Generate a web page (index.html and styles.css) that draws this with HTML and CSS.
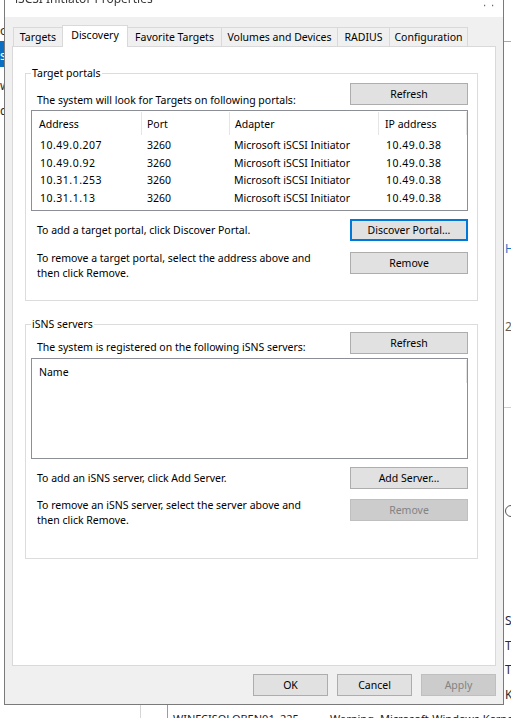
FILE: index.html
```html
<!DOCTYPE html>
<html lang="en">
<head>
<meta charset="utf-8">
<title>iSCSI Initiator Properties</title>
<link rel="stylesheet" href="styles.css">
</head>
<body>
<div class="desktop">

  <!-- console window behind the dialog -->
  <div class="console">
    <div class="console-tree">
      <div class="tree-item tree-first">os</div>
      <div class="tree-item tree-selected">sc</div>
      <div class="tree-item tree-third">wi</div>
      <div class="tree-item tree-fourth">dc</div>
    </div>
    <div class="console-main"></div>
    <div class="console-actions">
      <div class="act-rule act-rule-top"></div>
      <div class="act-item act-link">H</div>
      <div class="act-item act-date">20</div>
      <div class="act-rule act-rule-mid"></div>
      <div class="act-icon"></div>
      <div class="act-item act-s">S</div>
      <div class="act-item act-t">Ti</div>
      <div class="act-item act-t2">Ti</div>
      <div class="act-item act-k">Ke</div>
    </div>
    <div class="event-row">
      <div class="ev-cell ev-level"></div>
      <div class="ev-cell ev-flag"></div>
      <div class="ev-cell ev-computer">WINFCISOLOBEN01</div>
      <div class="ev-cell ev-id">225</div>
      <div class="ev-cell ev-type">Warning</div>
      <div class="ev-cell ev-source">Microsoft-Windows-Kernel</div>
    </div>
  </div>

  <!-- iSCSI Initiator Properties dialog -->
  <div class="dialog">
    <div class="titlebar">
      <span class="title">iSCSI Initiator Properties</span>
      <svg class="caption-close" width="12" height="8" viewBox="0 0 12 8"><path d="M2 6.5h1.2M10 6.5h1.2" stroke="#6a6a6a" stroke-width="1.4"/></svg>
    </div>

    <div class="dialog-body">
      <div class="tabstrip">
        <div class="tab">Targets</div>
        <div class="tab tab-active">Discovery</div>
        <div class="tab">Favorite Targets</div>
        <div class="tab">Volumes and Devices</div>
        <div class="tab">RADIUS</div>
        <div class="tab tab-last">Configuration</div>
      </div>

      <div class="tabpanel">
        <section class="group group-portals">
          <span class="legend">Target portals</span>
          <div class="g-row">
            <span class="g-text g-lead">The system will look for Targets on following portals:</span>
            <button class="btn">Refresh</button>
          </div>
          <div class="listview portal-list">
            <div class="lv-head lv-cols">
              <span class="lv-hcell">Address</span>
              <span class="lv-hcell">Port</span>
              <span class="lv-hcell">Adapter</span>
              <span class="lv-hcell">IP address</span>
            </div>
            <div class="lv-row lv-cols">
              <span class="lv-cell num">10.49.0.207</span><span class="lv-cell">3260</span><span class="lv-cell">Microsoft iSCSI Initiator</span><span class="lv-cell num">10.49.0.38</span>
            </div>
            <div class="lv-row lv-cols">
              <span class="lv-cell num">10.49.0.92</span><span class="lv-cell">3260</span><span class="lv-cell">Microsoft iSCSI Initiator</span><span class="lv-cell num">10.49.0.38</span>
            </div>
            <div class="lv-row lv-cols">
              <span class="lv-cell num">10.31.1.253</span><span class="lv-cell">3260</span><span class="lv-cell">Microsoft iSCSI Initiator</span><span class="lv-cell num">10.49.0.38</span>
            </div>
            <div class="lv-row lv-cols">
              <span class="lv-cell num">10.31.1.13</span><span class="lv-cell">3260</span><span class="lv-cell">Microsoft iSCSI Initiator</span><span class="lv-cell num">10.49.0.38</span>
            </div>
          </div>
          <div class="g-row g-row-center g-row-add">
            <span class="g-text">To add a target portal, click Discover Portal.</span>
            <button class="btn btn-default">Discover Portal...</button>
          </div>
          <div class="g-row g-row-remove">
            <span class="g-text g-multi">To remove a target portal, select the address above and<br>then click Remove.</span>
            <button class="btn">Remove</button>
          </div>
        </section>

        <section class="group group-isns">
          <span class="legend">iSNS servers</span>
          <div class="g-row">
            <span class="g-text g-lead">The system is registered on the following iSNS servers:</span>
            <button class="btn">Refresh</button>
          </div>
          <div class="listview isns-list">
            <div class="lv-head lv-single">
              <span class="lv-hcell">Name</span>
            </div>
          </div>
          <div class="g-row g-row-center g-row-add">
            <span class="g-text">To add an iSNS server, click Add Server.</span>
            <button class="btn">Add Server...</button>
          </div>
          <div class="g-row g-row-remove">
            <span class="g-text g-multi">To remove an iSNS server, select the server above and<br>then click Remove.</span>
            <button class="btn" disabled>Remove</button>
          </div>
        </section>
      </div>

      <div class="actions">
        <button class="btn btn-action">OK</button>
        <button class="btn btn-action">Cancel</button>
        <button class="btn btn-action" disabled>Apply</button>
      </div>
    </div>
  </div>
</div>
</body>
</html>
```
FILE: styles.css
```css
* { box-sizing: border-box; }

html, body {
  margin: 0;
  padding: 0;
  background: #ffffff;
}

body {
  font-family: "Noto Sans", "Open Sans", sans-serif;
  font-size: 10.5px;
  color: #000;
}

.desktop {
  position: relative;
  width: 511px;
  height: 718px;
  overflow: hidden;
  background: #ffffff;
}

/* ---------- console window in the background ---------- */
.console {
  position: absolute;
  inset: 0;
  display: grid;
  grid-template-columns: 60px 1fr 7px;
  grid-template-rows: 705px 13px;
  font-size: 12px;
  color: #2b2b2b;
}

.console-tree {
  padding-top: 23px;
  display: flex;
  flex-direction: column;
}

.tree-item {
  height: 15px;
  line-height: 15px;
  white-space: nowrap;
}

.tree-selected {
  margin-top: 3px;
  height: 26px;
  line-height: 30px;
  background: #0a6fc2;
  color: #fff;
}

.tree-third { margin-top: 11px; }
.tree-fourth { margin-top: 10px; }

.console-actions {
  display: flex;
  flex-direction: column;
  overflow: hidden;
  white-space: nowrap;
  padding-left: 1px;
}

.act-rule {
  height: 1px;
  margin-left: -1px;
  background: #a9a9a9;
  flex: none;
}
.act-rule-top { margin-top: 41px; }
.act-rule-mid { margin-top: 73px; background: #d0d0d0; }

.act-item {
  height: 14px;
  line-height: 14px;
  flex: none;
}
.act-link { margin-top: 200px; color: #1a73c9; }
.act-date { margin-top: 64px; color: #6d5b4a; }
.act-s { margin-top: 97px; color: #1f2a44; }
.act-t { margin-top: 11px; }
.act-t2 { margin-top: 10px; }
.act-k { margin-top: 11px; }

.act-icon {
  margin-top: 97px;
  width: 12px;
  height: 12px;
  border: 1px solid #555;
  border-radius: 50%;
  flex: none;
}

.event-row {
  grid-column: 1 / -1;
  display: flex;
  white-space: nowrap;
  font-size: 11px;
  line-height: 13px;
  color: #1b1b1b;
}

.ev-cell { padding-top: 7px; flex: none; }
.ev-level { width: 141px; border-right: 1px solid #d6d6d6; }
.ev-flag { width: 27px; border-right: 1px solid #9c9c9c; }
.ev-computer { width: 112px; padding-left: 5px; }
.ev-id { width: 50px; }
.ev-type { width: 50px; }

/* ---------- dialog window ---------- */
.dialog {
  position: absolute;
  left: 4px;
  top: -14px;
  width: 500px;
  height: 719px;
  border: 1px solid #7a7a7a;
  display: flex;
  flex-direction: column;
  background: #f0f0f0;
}

.titlebar {
  height: 30px;
  flex: none;
  background: #ffffff;
  display: flex;
  align-items: center;
  justify-content: space-between;
  padding: 0 9px 0 10px;
}

.title {
  font-size: 12px;
  line-height: 30px;
  color: #3a3a3a;
  filter: blur(0.5px);
  padding-bottom: 7px;
}

.caption-close {
  margin-top: 2px;
}

.dialog-body {
  flex: 1;
  display: flex;
  flex-direction: column;
  padding: 8px 7px 8px 7px;
}

/* tabs */
.tabstrip {
  display: grid;
  grid-template-columns: 49px 65px 94px 116px 52px 79px;
  align-items: end;
  height: 21px;
  margin-left: 1px;
  flex: none;
  position: relative;
  z-index: 1;
}

.tab {
  height: 19px;
  line-height: 18px;
  text-align: center;
  border-top: 1px solid #d9d9d9;
  border-left: 1px solid #d9d9d9;
  background: #f0f0f0;
  white-space: nowrap;
}

.tab-last { border-right: 1px solid #d9d9d9; }

.tab-active {
  height: 22px;
  margin-bottom: -1px;
  margin-right: -1px;
  padding-bottom: 3px;
  border-right: 1px solid #d9d9d9;
  background: #ffffff;
  position: relative;
  z-index: 2;
}

.tabpanel {
  flex: 1;
  background: #ffffff;
  border: 1px solid #d9d9d9;
  padding: 26px 17px 0 12px;
}

/* group boxes */
.group {
  position: relative;
  border: 1px solid #dcdcdc;
  padding: 0 9px 0 5px;
}

.group-portals { padding-top: 9px; padding-bottom: 20px; }
.group-isns { margin-top: 23px; padding-top: 7px; padding-bottom: 31px; }

.legend {
  position: absolute;
  left: 5px;
  top: -8px;
  padding: 0 1px;
  line-height: 14px;
  background: #ffffff;
}

.g-row {
  display: flex;
  justify-content: space-between;
  align-items: flex-start;
}

.g-row-center { align-items: center; }
.g-row-add { margin-top: 8px; }
.group-isns .g-row-remove { margin-top: 10px; }
.group-portals .g-row-remove { margin-top: 11px; }

.g-text {
  margin-left: 6px;
  line-height: 14px;
  white-space: nowrap;
}

.g-lead { margin-top: 10px; }
.group-isns .g-lead { margin-top: 8px; }

.g-multi {
  line-height: 14.5px;
  margin-top: -1px;
}

/* buttons */
.btn {
  font: inherit;
  color: #000;
  width: 118px;
  height: 22px;
  padding: 0;
  background: #e1e1e1;
  border: 1px solid #adadad;
  border-radius: 0;
  flex: none;
  line-height: 18px;
}

.btn-default {
  border-color: #0078d7;
  box-shadow: inset 0 0 0 1px #0078d7;
}

.btn:disabled {
  background: #cccccc;
  border-color: #bfbfbf;
  color: #838383;
}

.actions {
  display: flex;
  justify-content: flex-end;
  gap: 9px;
  margin-top: 8px;
  flex: none;
}

.btn-action { width: 75px; }

/* list views */
.listview {
  height: 101px;
  border: 1px solid #8c8f96;
  background: #ffffff;
  overflow: hidden;
}

.portal-list { margin-top: 3px; }
.isns-list { margin-top: 4px; }

.lv-cols {
  display: grid;
  grid-template-columns: 110px 88px 149px 88px;
}

.lv-single {
  display: grid;
  grid-template-columns: 435px;
}

.lv-head {
  height: 26px;
}

.lv-hcell {
  display: flex;
  align-items: center;
  padding-left: 5px;
  border-right: 1px solid #e5e5e5;
  white-space: nowrap;
  margin-top: 1px;
  margin-bottom: 2px;
}
.lv-hcell:first-child { padding-left: 7px; }
.lv-hcell:nth-child(4) { padding-left: 6px; }

.lv-row {
  height: 17.5px;
  line-height: 17.5px;
}

.lv-cell {
  padding-left: 5px;
  white-space: nowrap;
}
.lv-cell:first-child { padding-left: 8px; }
.lv-cell:nth-child(3) { padding-left: 4px; }
.lv-cell:nth-child(4) { padding-left: 7px; }

.num { letter-spacing: 0.5px; }
```
